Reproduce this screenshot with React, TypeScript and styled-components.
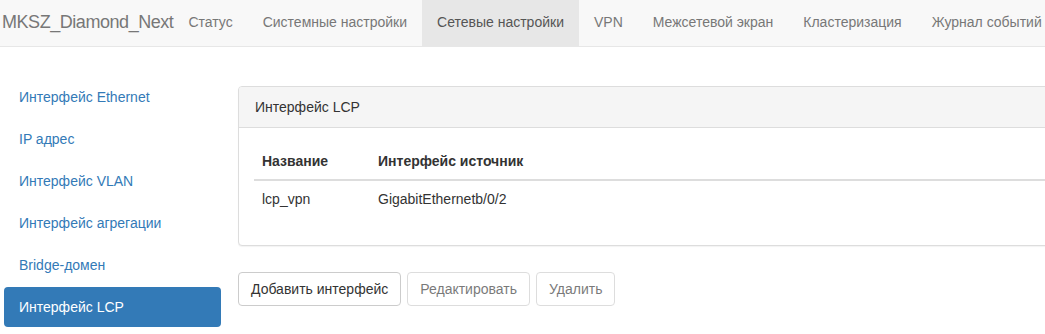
import styled, { createGlobalStyle } from "styled-components";

const GlobalStyle = createGlobalStyle`
  html, body {
    margin: 0;
    padding: 0;
    background: #fff;
    overflow: hidden;
  }
  body {
    font-family: "Liberation Sans", Arial, sans-serif;
    font-size: 14px;
    line-height: 20px;
    color: #333;
  }
  * {
    box-sizing: border-box;
  }
`;

const topItems = [
  "Статус",
  "Системные настройки",
  "Сетевые настройки",
  "VPN",
  "Межсетевой экран",
  "Кластеризация",
  "Журнал событий",
];

const sideItems = [
  "Интерфейс Ethernet",
  "IP адрес",
  "Интерфейс VLAN",
  "Интерфейс агрегации",
  "Bridge-домен",
  "Интерфейс LCP",
];

const App = () => {
  return (
    <Page>
      <GlobalStyle />
      <Navbar>
        <Brand>MKSZ_Diamond_Next</Brand>
        {topItems.map((item) => (
          <NavLink key={item} $active={item === "Сетевые настройки"}>
            {item}
          </NavLink>
        ))}
      </Navbar>

      <Content>
        <Sidebar>
          {sideItems.map((item) => (
            <SideLink key={item} $active={item === "Интерфейс LCP"}>
              {item}
            </SideLink>
          ))}
        </Sidebar>

        <Main>
          <Panel>
            <PanelHeading>Интерфейс LCP</PanelHeading>
            <PanelBody>
              <Table>
                <thead>
                  <tr>
                    <Th $width={116}>Название</Th>
                    <Th>Интерфейс источник</Th>
                  </tr>
                </thead>
                <tbody>
                  <tr>
                    <Td>lcp_vpn</Td>
                    <Td>GigabitEthernetb/0/2</Td>
                  </tr>
                </tbody>
              </Table>
            </PanelBody>
          </Panel>

          <Toolbar>
            <Button>Добавить интерфейс</Button>
            <Button disabled>Редактировать</Button>
            <Button disabled>Удалить</Button>
          </Toolbar>
        </Main>
      </Content>
    </Page>
  );
};

const Page = styled.div`
  width: 1045px;
  height: 334px;
  overflow: hidden;
`;

const Navbar = styled.nav`
  display: flex;
  align-items: stretch;
  height: 47px;
  background: #f8f8f8;
  border-bottom: 1px solid #e7e7e7;
  white-space: nowrap;
`;

const Brand = styled.a`
  display: flex;
  align-items: center;
  padding: 0 0 3px 2px;
  font-size: 18px;
  letter-spacing: -0.45px;
  color: #777;
`;

const NavLink = styled.a<{ $active?: boolean }>`
  display: flex;
  align-items: center;
  padding: 0 15px 3px;
  font-size: 14px;
  color: ${(p) => (p.$active ? "#555" : "#777")};
  background: ${(p) => (p.$active ? "#e7e7e7" : "transparent")};
`;

const Content = styled.div`
  display: flex;
  align-items: flex-start;
  gap: 17px;
  padding: 30px 0 0 4px;
`;

const Sidebar = styled.ul`
  display: flex;
  flex-direction: column;
  gap: 2px;
  width: 217px;
  flex-shrink: 0;
  margin: 0;
  padding: 0;
  list-style: none;
`;

const SideLink = styled.li<{ $active?: boolean }>`
  height: 40px;
  padding: 10px 15px;
  border-radius: 4px;
  color: ${(p) => (p.$active ? "#fff" : "#337ab7")};
  background: ${(p) => (p.$active ? "#337ab7" : "transparent")};
`;

const Main = styled.div`
  width: 840px;
  flex-shrink: 0;
  padding-top: 9px;
`;

const Panel = styled.div`
  border: 1px solid #ddd;
  border-radius: 4px;
  background: #fff;
  box-shadow: 0 1px 1px rgba(0, 0, 0, 0.05);
`;

const PanelHeading = styled.div`
  padding: 10px 16px;
  background: #f5f5f5;
  border-bottom: 1px solid #ddd;
  border-radius: 3px 3px 0 0;
  color: #333;
`;

const PanelBody = styled.div`
  padding: 15px 15px 28px;
`;

const Table = styled.table`
  width: 100%;
  border-collapse: collapse;
  border-spacing: 0;
`;

const Th = styled.th<{ $width?: number }>`
  width: ${(p) => (p.$width ? `${p.$width}px` : "auto")};
  padding: 8px;
  text-align: left;
  font-weight: bold;
  border-bottom: 2px solid #ddd;
`;

const Td = styled.td`
  padding: 8px;
`;

const Toolbar = styled.div`
  display: flex;
  gap: 6px;
  margin-top: 26px;
`;

const Button = styled.button`
  height: 34px;
  padding: 6px 12px;
  font-family: "Liberation Sans", Arial, sans-serif;
  font-size: 14px;
  line-height: 20px;
  color: #333;
  background: #fff;
  border: 1px solid #ccc;
  border-radius: 4px;

  &:disabled {
    opacity: 0.65;
  }
`;

export default App;
